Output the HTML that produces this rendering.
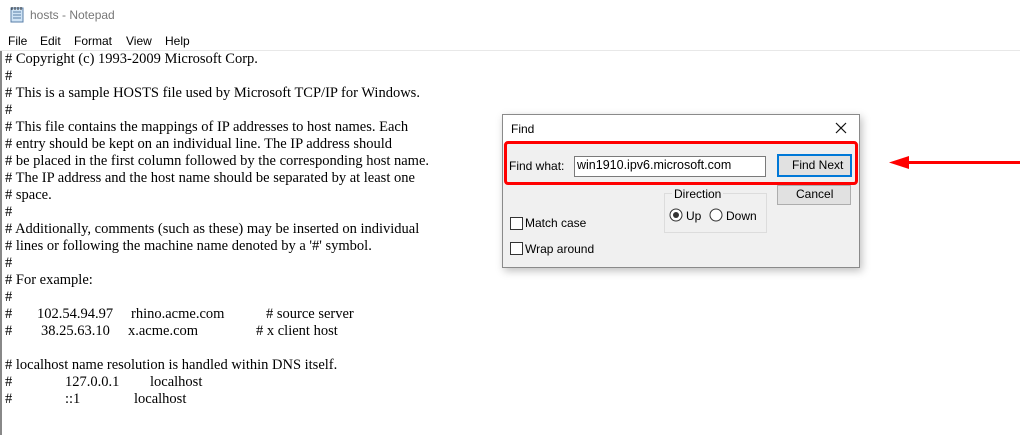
<!DOCTYPE html>
<html><head><style>
body{margin:0;width:1020px;height:435px;overflow:hidden;background:#fff;position:relative;font-family:"Liberation Sans",sans-serif}
.a{position:absolute;white-space:pre}
.t{font-family:"Liberation Serif",serif;font-size:14.5px;color:#000;line-height:17px}
.ui{font-size:12px;color:#000}
</style></head><body>
<div class="a" style="left:0;top:0;width:1020px;height:30px;background:#fff"></div>
<svg class="a" style="left:8px;top:6px" width="18" height="18"><rect x="3" y="2" width="12" height="14" fill="#cfe3f5" stroke="#5a7fa8"/><path d="M5 6h8M5 9h8M5 12h8" stroke="#5a7fa8"/><path d="M4 1v3M7 1v3M10 1v3M13 1v3" stroke="#333"/></svg>
<div class="a" style="left:30px;top:8px;font-size:12px;color:#777">hosts - Notepad</div>
<div class="a ui" style="left:8px;top:34px">File</div>
<div class="a ui" style="left:40px;top:34px">Edit</div>
<div class="a ui" style="left:74px;top:34px">Format</div>
<div class="a ui" style="left:126px;top:34px">View</div>
<div class="a ui" style="left:165px;top:34px">Help</div>
<div class="a" style="left:0;top:50px;width:1020px;height:1px;background:#e8e8e8"></div>
<div class="a" style="left:0;top:51px;width:2px;height:384px;background:#888"></div>
<div class="a t" style="left:5px;top:51px"># Copyright (c) 1993-2009 Microsoft Corp.
#
# This is a sample HOSTS file used by Microsoft TCP/IP for Windows.
#
# This file contains the mappings of IP addresses to host names. Each
# entry should be kept on an individual line. The IP address should
# be placed in the first column followed by the corresponding host name.
# The IP address and the host name should be separated by at least one
# space.
#
# Additionally, comments (such as these) may be inserted on individual
# lines or following the machine name denoted by a '#' symbol.
#
# For example:
#
#
#

# localhost name resolution is handled within DNS itself.
#
#</div>
<div class="a t" style="left:37px;top:306px">102.54.94.97</div>
<div class="a t" style="left:131px;top:306px">rhino.acme.com</div>
<div class="a t" style="left:266px;top:306px"># source server</div>
<div class="a t" style="left:41px;top:323px">38.25.63.10</div>
<div class="a t" style="left:128px;top:323px">x.acme.com</div>
<div class="a t" style="left:256px;top:323px"># x client host</div>
<div class="a t" style="left:65px;top:374px">127.0.0.1</div>
<div class="a t" style="left:150px;top:374px">localhost</div>
<div class="a t" style="left:65px;top:391px">::1</div>
<div class="a t" style="left:134px;top:391px">localhost</div>

<div class="a" style="left:502px;top:114px;width:356px;height:152px;background:#f0f0f0;border:1px solid #8a8a8a;box-shadow:2px 3px 8px rgba(0,0,0,.25)"></div>
<div class="a" style="left:503px;top:115px;width:356px;height:29px;background:#fff"></div>
<div class="a ui" style="left:511px;top:122px">Find</div>
<svg class="a" style="left:835px;top:122px" width="12" height="12"><path d="M1 1L11 11M11 1L1 11" stroke="#111" stroke-width="1.2"/></svg>
<div class="a ui" style="left:509px;top:159px">Find what:</div>
<div class="a" style="left:574px;top:156px;width:190px;height:19px;background:#fff;border:1px solid #7a7a7a"></div>
<div class="a ui" style="left:577px;top:158px;font-size:12.5px">win1910.ipv6.microsoft.com</div>
<div class="a" style="left:777px;top:154px;width:71px;height:19px;background:#e1e1e1;border:2px solid #0078d7"></div>
<div class="a ui" style="left:792px;top:158px">Find Next</div>
<div class="a" style="left:777px;top:185px;width:72px;height:18px;background:#e1e1e1;border:1px solid #adadad"></div>
<div class="a ui" style="left:796px;top:187px">Cancel</div>
<div class="a" style="left:664px;top:193px;width:101px;height:38px;border:1px solid #dcdcdc"></div>
<div class="a ui" style="left:672px;top:187px;background:#f0f0f0;padding:0 2px">Direction</div>
<svg class="a" style="left:669px;top:208px" width="14" height="14"><circle cx="7" cy="7" r="6" fill="#fff" stroke="#333"/><circle cx="7" cy="7" r="3" fill="#333"/></svg>
<div class="a ui" style="left:686px;top:209px">Up</div>
<svg class="a" style="left:709px;top:208px" width="14" height="14"><circle cx="7" cy="7" r="6" fill="#fff" stroke="#333"/></svg>
<div class="a ui" style="left:726px;top:209px">Down</div>
<div class="a" style="left:510px;top:217px;width:11px;height:11px;background:#fff;border:1px solid #333"></div>
<div class="a ui" style="left:525px;top:216px">Match case</div>
<div class="a" style="left:510px;top:242px;width:11px;height:11px;background:#fff;border:1px solid #333"></div>
<div class="a ui" style="left:525px;top:242px">Wrap around</div>
<div class="a" style="left:504px;top:141px;width:348px;height:38px;border:3px solid #ff0000;border-radius:4px"></div>
<div class="a" style="left:905px;top:161px;width:115px;height:3px;background:#ff0000"></div>
<svg class="a" style="left:889px;top:156px" width="20" height="13"><path d="M0 6.5L20 0V13Z" fill="#ff0000"/></svg>
</body></html>
